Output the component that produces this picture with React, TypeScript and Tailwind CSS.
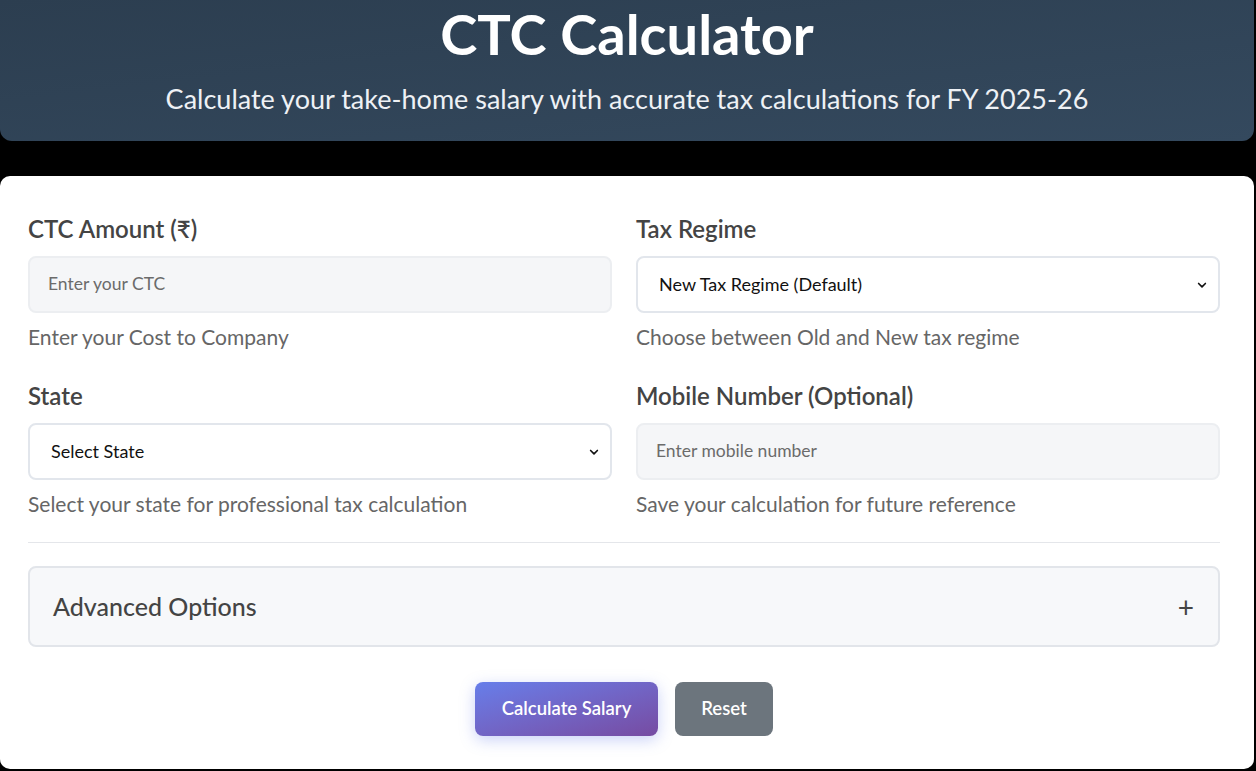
import React from "react";

const font = { fontFamily: "Lato, 'Noto Sans', sans-serif" };

function Chevron() {
  return (
    <svg width="12" height="12" viewBox="0 0 16 16" className="absolute right-[10px] top-1/2 -translate-y-1/2" fill="none">
      <path d="M3.5 6l4.5 4.5L12.5 6" stroke="#111" strokeWidth="2.2" strokeLinecap="round" strokeLinejoin="round" />
    </svg>
  );
}

function Field({ label, help, children }: { label: string; help: string; children: React.ReactNode }) {
  return (
    <div className="flex flex-col">
      <div className="text-[24px] font-semibold text-[#444] leading-[28px] mb-[13px]">{label}</div>
      {children}
      <div className="text-[21px] text-[#666] leading-[26px] mt-[11px]">{help}</div>
    </div>
  );
}

export default function App() {
  return (
    <div className="w-[1256px] h-[771px] bg-black overflow-hidden" style={font}>
      <div className="w-[1254px] h-[141px] rounded-b-[12px] bg-gradient-to-br from-[#2c3e50] to-[#34495e] flex flex-col items-center">
        <h1 className="text-[56px] font-bold text-white leading-[56px] mt-[6px]">CTC Calculator</h1>
        <p className="text-[27px] text-[#eef1f5] leading-[32px] mt-[21px]">
          Calculate your take-home salary with accurate tax calculations for FY 2025-26
        </p>
      </div>
      <div className="w-[1254px] h-[593px] mt-[35px] bg-white rounded-[10px] pl-[28px] pr-[34px] pt-[39px]">
        <div className="grid grid-cols-2 gap-x-[24px] gap-y-[32px]">
          <Field label="CTC Amount (₹)" help="Enter your Cost to Company">
            <div className="h-[57px] rounded-[8px] border-2 border-[#eceef1] bg-[#f5f6f8] flex items-center px-[18px] text-[17.5px] text-[#6b6b6b]">
              Enter your CTC
            </div>
          </Field>
          <Field label="Tax Regime" help="Choose between Old and New tax regime">
            <div className="relative h-[57px] rounded-[8px] border-2 border-[#e2e6ec] bg-white flex items-center px-[21px] text-[18px] text-[#111]">
              New Tax Regime (Default)
              <Chevron />
            </div>
          </Field>
          <Field label="State" help="Select your state for professional tax calculation">
            <div className="relative h-[57px] rounded-[8px] border-2 border-[#e2e6ec] bg-white flex items-center px-[21px] text-[18px] text-[#111]">
              Select State
              <Chevron />
            </div>
          </Field>
          <Field label="Mobile Number (Optional)" help="Save your calculation for future reference">
            <div className="h-[57px] rounded-[8px] border-2 border-[#eceef1] bg-[#f5f6f8] flex items-center px-[18px] text-[17.5px] text-[#6b6b6b]">
              Enter mobile number
            </div>
          </Field>
        </div>
        <div className="h-px bg-[#e4e6ea] mt-[25px]" />
        <div className="mt-[23px] h-[81px] rounded-[8px] border-2 border-[#e2e5ea] bg-[#f7f8fa] flex items-center justify-between pl-[23px] pr-[24px]">
          <span className="text-[25px] font-medium text-[#444]">Advanced Options</span>
          <span className="text-[28px] text-[#444] leading-none">+</span>
        </div>
        <div className="flex justify-center gap-[17px] mt-[35px]">
          <button className="w-[183px] h-[54px] rounded-[8px] bg-gradient-to-br from-[#667eea] to-[#764ba2] text-white text-[18.5px] font-semibold shadow-[0_4px_15px_rgba(102,126,234,0.35)]">
            Calculate Salary
          </button>
          <button className="w-[98px] h-[54px] rounded-[8px] bg-[#6c757d] text-white text-[18.5px] font-semibold">
            Reset
          </button>
        </div>
      </div>
    </div>
  );
}
